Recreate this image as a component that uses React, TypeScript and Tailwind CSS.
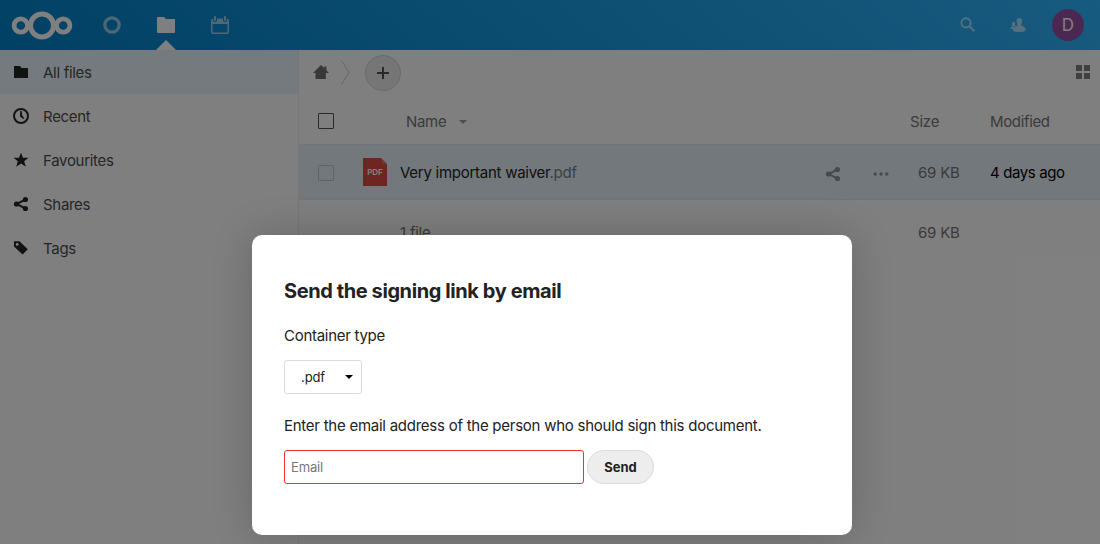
import React from "react";

function ShareIcon({ className }: { className?: string }) {
  return (
    <svg viewBox="0 0 16 16" className={className} fill="currentColor">
      <path d="M12.300 3.600L3.500 8l8.800 4.400" fill="none" stroke="currentColor" strokeWidth="2" />
      <circle cx="12.400" cy="3.500" r="2.600" />
      <circle cx="3.500" cy="8" r="2.600" />
      <circle cx="12.400" cy="12.500" r="2.600" />
    </svg>
  );
}

const navItems = [
  {
    label: "All files",
    active: true,
    icon: (
      <svg viewBox="0 0 14 12" className="ml-[14px] h-3 w-[14px]">
        <path d="M0 0h6l1.600 2H14v10H0z" />
      </svg>
    ),
  },
  {
    label: "Recent",
    active: false,
    icon: (
      <svg viewBox="0 0 16 16" className="ml-[13px] size-4">
        <circle cx="8" cy="8" r="7" fill="none" stroke="#000" strokeWidth="2" />
        <path d="M7.200 3h1.500l.6 4.700 2.100 2.200-1 1.100L7 8.500z" />
      </svg>
    ),
  },
  {
    label: "Favourites",
    active: false,
    icon: (
      <svg viewBox="0 0 16 16" className="ml-[13px] size-4">
        <path d="M8 .7l2 5.100h5.500l-4.300 3.500 1.600 5.400L8 11.500l-4.800 3.200 1.600-5.400L.5 5.800H6z" />
      </svg>
    ),
  },
  {
    label: "Shares",
    active: false,
    icon: <ShareIcon className="ml-[13px] size-4" />,
  },
  {
    label: "Tags",
    active: false,
    icon: (
      <svg viewBox="0 0 16 16" className="ml-[13px] size-4">
        <path
          fillRule="evenodd"
          d="M1 1.200h5.500l8.300 8-5.200 5.300L1 6.500zM4.200 3a1.400 1.400 0 1 0 0 2.800 1.400 1.400 0 0 0 0-2.800z"
        />
      </svg>
    ),
  },
];

function Header() {
  return (
    <header className="flex h-[50px] justify-between bg-[linear-gradient(40deg,#0082c9_0%,#30b6ff_100%)] text-white">
      <div className="flex">
        <svg viewBox="0 0 62 50" className="ml-[11px] mr-3 h-[50px] w-[62px]" fill="none" stroke="#fff">
          <circle cx="31" cy="25.500" r="11.500" strokeWidth="5" />
          <circle cx="9.800" cy="25.500" r="6.700" strokeWidth="4.800" />
          <circle cx="52.200" cy="25.500" r="6.700" strokeWidth="4.800" />
        </svg>
        <div className="flex w-[54px] items-center justify-center">
          <svg viewBox="0 0 18 18" className="size-[18px] opacity-60" fill="none" stroke="#fff" strokeWidth="3.200">
            <circle cx="9" cy="9" r="7.200" />
          </svg>
        </div>
        <div className="flex w-[54px] flex-col items-center">
          <svg viewBox="0 0 18 16" className="mt-[17px] h-4 w-[18px]" fill="#fff">
            <path d="M.7 0h6.300l2 2h8.300q.7 0 .7.700V15q0 1-1 1H1q-1 0-1-1V.7q0-.7.7-.7z" />
          </svg>
          <svg viewBox="0 0 20 10" className="mt-[7px] h-[10px] w-5" fill="#fff">
            <path d="M10 0l10 10H0z" />
          </svg>
        </div>
        <div className="flex w-[54px] items-center justify-center">
          <svg viewBox="0 0 18 18" className="size-[18px] opacity-60" fill="#fff">
            <path
              fillRule="evenodd"
              d="M4 0q1 0 1 1v3q0 1-1 1T3 4V1q0-1 1-1zm10 0q1 0 1 1v3q0 1-1 1t-1-1V1q0-1 1-1zM6 2.500h6V4q0 2 2 2t2-2V2.600q2 .4 2 2.400v11q0 2-2 2H2q-2 0-2-2V5q0-2 2-2.400V4q0 2 2 2t2-2zM1.500 8v7.500q0 1 1 1h13q1 0 1-1V8z"
            />
          </svg>
        </div>
      </div>
      <div className="flex items-center">
        <svg viewBox="0 0 16 16" className="mr-[34px] size-4 opacity-60" fill="none" stroke="#fff">
          <circle cx="6" cy="5.800" r="4.600" strokeWidth="1.900" />
          <path d="M9.400 9.200l5 5" strokeWidth="2.200" />
        </svg>
        <svg viewBox="0 0 16 16" className="mr-[26px] size-4 opacity-60" fill="#fff">
          <path d="M9.400 1C7.800 1 6.600 2.100 6.600 3.700c0 1.500.4 2.200.8 2.900.2.500.1 1.500 0 2C6 9.300 2.800 10.400 2.800 11.800v1.400c0 1 2.800 1.800 6.600 1.800s6.200-.8 6.200-1.800v-1.400c0-1.400-2.800-2.500-4.200-3.200-.1-.5-.2-1.500 0-2 .4-.7.8-1.400.8-2.900C12.200 2.100 11 1 9.400 1z" />
          <path d="M3.500 5C2.500 5 2 5.700 2 6.700c0 1 .5 1.700.5 2.300C2.500 10 .5 10 .5 11v1h2.200c0-1.700 1.500-2.600 3-3.300-.8-.5-.5-1-.5-2C5.200 5.700 4.500 5 3.500 5z" />
        </svg>
        <div className="mr-4 flex size-8 items-center justify-center rounded-full bg-[#9750a4] pb-px text-[17px]">
          D
        </div>
      </div>
    </header>
  );
}

function Sidebar() {
  return (
    <nav className="w-[299px] shrink-0 border-r border-[#ededed]">
      {navItems.map((item) => (
        <div
          key={item.label}
          className={item.active ? "flex h-11 items-center bg-[#e8f4fa]" : "flex h-11 items-center"}
        >
          <span className="flex w-[43px] opacity-85">{item.icon}</span>
          <span className="pt-[2px] tracking-[-0.3px] text-[#4d4d4d]">{item.label}</span>
        </div>
      ))}
    </nav>
  );
}

function FileList() {
  return (
    <main className="flex grow flex-col tracking-[-0.22px] text-[#767676]">
      <div className="flex h-11 items-center">
        <svg viewBox="0 0 16 14" className="ml-[14px] h-[14px] w-4" fill="#707070">
          <path d="M8 0L0 8h2.500v6h10.300V8H16l-2.600-2.700V1.500h-2.200v1.600z" />
        </svg>
        <svg viewBox="0 0 9 25" className="ml-3 h-[25px] w-[9px]" fill="none" stroke="#cfcfcf">
          <path d="M.5.500l7.500 12-7.500 12" />
        </svg>
        <div className="ml-[15px] mt-[2px] flex size-9 items-center justify-center rounded-full border border-[#d5d5d5] bg-[#ededed]">
          <svg viewBox="0 0 12 12" className="size-3" fill="none" stroke="#555" strokeWidth="2">
            <path d="M6 0v12M0 6h12" />
          </svg>
        </div>
        <svg viewBox="0 0 14 14" className="ml-auto mr-[10px] size-[14px]" fill="#808080">
          <path d="M0 0h6v6H0zM8 0h6v6H8zM0 8h6v6H0zM8 8h6v6H8z" />
        </svg>
      </div>
      <div className="flex h-[51px] items-center border-b border-[#e4e8ea] pt-[6px]">
        <span className="-mt-[2px] ml-[19px] size-4 rounded-[1px] border border-[#555]" />
        <span className="ml-[72px] w-[53px] tracking-[-0.3px]">Name</span>
        <svg viewBox="0 0 8 4" className="h-1 w-2" fill="#999">
          <path d="M0 0h8L4 4z" />
        </svg>
        <span className="ml-auto w-20">Size</span>
        <span className="w-[110px] tracking-[-0.35px]">Modified</span>
      </div>
      <div className="flex h-[55px] items-center border-b border-[#e2e6e9] bg-[#e6f1f8]">
        <span className="ml-[19px] mt-px size-4 rounded-[1px] border border-[#bcc8cf]" />
        <svg viewBox="0 0 24 28" className="ml-[29px] h-7 w-6">
          <path d="M0 0h18l6 6v22H0z" fill="#df4c45" />
          <path d="M18 0l6 6h-4.500z" fill="#e4736c" />
          <text x="12" y="16.800" textAnchor="middle" fontSize="8" fontWeight="600" letterSpacing="0" fill="#fff">
            PDF
          </text>
        </svg>
        <span className="ml-[13px] mt-[2px] tracking-[-0.26px] text-[#222]">
          Very important waiver<span className="text-[#7f7f7f]">.pdf</span>
        </span>
        <ShareIcon className="ml-auto mt-[4px] size-4 text-[#8e9599]" />
        <svg viewBox="0 0 16 4" className="ml-8 mt-[4px] h-1 w-4" fill="#8e9599">
          <circle cx="2.200" cy="2" r="1.700" />
          <circle cx="8" cy="2" r="1.700" />
          <circle cx="13.800" cy="2" r="1.700" />
        </svg>
        <span className="ml-[29px] mt-[2px] w-[72px]">69 KB</span>
        <span className="mt-[2px] w-[110px] tracking-[-0.38px] text-black">4 days ago</span>
      </div>
      <div className="flex h-16 items-center pt-[2px]">
        <span className="ml-[101px]">1 file</span>
        <span className="ml-auto w-[182px]">69 KB</span>
      </div>
    </main>
  );
}

function SigningDialog() {
  return (
    <section
      role="dialog"
      className="absolute left-[252px] top-[235px] flex h-[300px] w-[600px] flex-col items-start rounded-[10px] bg-white px-8 pt-[43px] text-[#222] shadow-[0_0_40px_rgba(0,0,0,0.2)]"
    >
      <h2 className="text-[20px] font-bold leading-[26px] tracking-[-0.41px]">Send the signing link by email</h2>
      <p className="mt-5 leading-6 tracking-[-0.28px]">Container type</p>
      <button className="mt-3 flex h-[34px] w-[78px] items-center rounded-[3px] border border-[#dbdbdb] pl-4 text-[13px] text-[#222]">
        <span className="w-[44px] text-left tracking-[-0.1px]">.pdf</span>
        <svg viewBox="0 0 8 4" className="h-1 w-2" fill="#000">
          <path d="M0 0h8L4 4z" />
        </svg>
      </button>
      <p className="mt-5 leading-6 tracking-[-0.255px]">
        Enter the email address of the person who should sign this document.
      </p>
      <div className="mt-3 flex gap-[3px]">
        <input
          placeholder="Email"
          className="h-[34px] w-[300px] rounded-[3px] border border-[#e9322d] px-[6px] text-[13px] tracking-[-0.15px] placeholder:text-[#767676]"
        />
        <button className="h-[34px] w-[67px] rounded-full border border-[#dbdbdb] bg-[#ededed] text-[13px] font-bold">
          Send
        </button>
      </div>
    </section>
  );
}

export default function App() {
  return (
    <div className="relative flex h-[544px] w-[1100px] flex-col overflow-hidden bg-white font-['Inter','Liberation_Sans',sans-serif] text-[15px] leading-6">
      <Header />
      <div className="flex grow">
        <Sidebar />
        <FileList />
      </div>
      <div className="absolute inset-0 bg-black/50" />
      <SigningDialog />
    </div>
  );
}
